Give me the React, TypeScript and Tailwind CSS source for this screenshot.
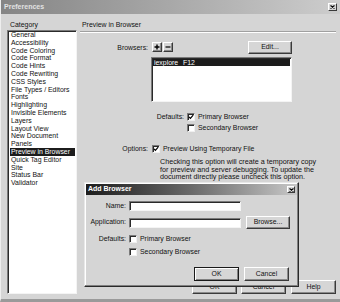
import React from "react";

const cats = [
  "General",
  "Accessibility",
  "Code Coloring",
  "Code Format",
  "Code Hints",
  "Code Rewriting",
  "CSS Styles",
  "File Types / Editors",
  "Fonts",
  "Highlighting",
  "Invisible Elements",
  "Layers",
  "Layout View",
  "New Document",
  "Panels",
  "Preview in Browser",
  "Quick Tag Editor",
  "Site",
  "Status Bar",
  "Validator",
];

function Btn({
  children,
  className = "",
  def = false,
}: {
  children: React.ReactNode;
  className?: string;
  def?: boolean;
}) {
  return (
    <div
      className={`flex items-center justify-center bg-[#d6d6d6] ${
        def
          ? "border border-[#1a1a1a] shadow-[inset_1px_1px_0_#ffffff,inset_-1px_-1px_0_#808080]"
          : "border border-t-white border-l-white border-r-[#3a3a3a] border-b-[#3a3a3a] shadow-[inset_-1px_-1px_0_#8a8a8a]"
      } ${className}`}
    >
      {children}
    </div>
  );
}

function Check({ checked = false }: { checked?: boolean }) {
  return (
    <div className="relative w-[8px] h-[8px] shrink-0 bg-white border border-t-[#7a7a7a] border-l-[#7a7a7a] border-r-[#f0f0f0] border-b-[#f0f0f0] shadow-[inset_1px_1px_0_#2a2a2a]">
      {checked && (
        <svg
          className="absolute left-0 top-0"
          width="6"
          height="6"
          viewBox="0 0 6 6"
        >
          <path d="M1 2.8 L2.4 4.3 L5.2 1.2" stroke="#000" strokeWidth="1.2" fill="none" />
        </svg>
      )}
    </div>
  );
}

function CloseBox({ className = "" }: { className?: string }) {
  return (
    <div
      className={`relative bg-[#d6d6d6] border border-t-white border-l-white border-r-[#3a3a3a] border-b-[#3a3a3a] ${className}`}
    >
      <svg className="absolute left-[1px] top-[1px]" width="5" height="4" viewBox="0 0 5 4">
        <path d="M0.5 0.5 L4.5 3.5 M4.5 0.5 L0.5 3.5" stroke="#000" strokeWidth="1.1" />
      </svg>
    </div>
  );
}

export default function App() {
  return (
    <div className="relative w-[340px] h-[302px] overflow-hidden bg-[#d5d5d5] text-[6.9px] text-[#111] font-['Liberation_Sans',Arial,sans-serif] border-b-[3px] border-b-[#9a9a9a] border-l border-l-[#eeeeee]">
      {/* title bar */}
      <div className="h-[14px] flex items-center justify-between bg-gradient-to-r from-[#858585] to-[#cdcdcd] pl-[3px] pr-[3px]">
        <span className="font-bold text-[7px] text-[#e2e2e2]">Preferences</span>
        <CloseBox className="w-[9px] h-[8px]" />
      </div>

      <div className="flex h-[285px]">
        {/* left column */}
        <div className="w-[79px] pl-[6px] pt-[6px] shrink-0">
          <div className="h-[10px] leading-[10px] pl-[3px]">Category</div>
          <div className="w-[70px] h-[264px] bg-white border border-t-[#7a7a7a] border-l-[#7a7a7a] border-r-[#f4f4f4] border-b-[#f4f4f4] shadow-[inset_1px_1px_0_#2a2a2a] pt-[0px]">
            {cats.map((c) => (
              <div
                key={c}
                className={`h-[7.8px] leading-[7.8px] ml-[2px] mr-[1px] pl-[1px] whitespace-nowrap ${
                  c === "Preview in Browser" ? "bg-[#1c1c1c] text-white" : ""
                }`}
              >
                {c}
              </div>
            ))}
          </div>
        </div>

        {/* right column */}
        <div className="flex-1 flex flex-col pt-[6px]">
          <div className="h-[10px] leading-[10px] pl-[2px]">Preview in Browser</div>
          <div className="h-[2px] mt-[1px] border-t border-t-[#a0a0a0] border-b border-b-white mr-[4px]" />

          {/* Browsers row */}
          <div className="flex items-start mt-[8px] h-[13px]">
            <div className="w-[68px] text-right leading-[13px]">Browsers:</div>
            <div className="ml-[4px] w-[140px] flex justify-between">
              <div className="flex gap-[1px] mt-[1px]">
                <Btn className="w-[10px] h-[10px]">
                  <svg width="6" height="6" viewBox="0 0 6 6">
                    <path d="M3 0.5 V5.5 M0.5 3 H5.5" stroke="#000" strokeWidth="1.4" />
                  </svg>
                </Btn>
                <Btn className="w-[10px] h-[10px]">
                  <svg width="6" height="6" viewBox="0 0 6 6">
                    <path d="M0.5 3 H5.5" stroke="#000" strokeWidth="1.2" />
                  </svg>
                </Btn>
              </div>
              <Btn className="w-[44px] h-[13px]">Edit...</Btn>
            </div>
          </div>

          {/* browser listbox */}
          <div className="ml-[71px] mt-[3px] w-[141px] h-[45px] bg-white border border-t-[#7a7a7a] border-l-[#7a7a7a] border-r-[#f4f4f4] border-b-[#f4f4f4] shadow-[inset_1px_1px_0_#2a2a2a] pt-[1px]">
            <div className="h-[7px] leading-[7px] mx-[1px] bg-[#1c1c1c] text-white flex">
              <span className="w-[30px] pl-[1px]">iexplore</span>
              <span>F12</span>
            </div>
          </div>

          {/* Defaults */}
          <div className="flex items-center mt-[11px] h-[8px]">
            <div className="w-[104px] text-right">Defaults:</div>
            <div className="ml-[3px]">
              <Check checked />
            </div>
            <div className="ml-[3px]">Primary Browser</div>
          </div>
          <div className="flex items-center mt-[3px] h-[8px]">
            <div className="ml-[107px]">
              <Check />
            </div>
            <div className="ml-[3px]">Secondary Browser</div>
          </div>

          {/* Options */}
          <div className="flex items-center mt-[13px] h-[8px]">
            <div className="w-[68px] text-right">Options:</div>
            <div className="ml-[4px]">
              <Check checked />
            </div>
            <div className="ml-[3px]">Preview Using Temporary File</div>
          </div>
          <div className="ml-[80px] mt-[5px] leading-[7.5px] w-[180px] text-[7.2px] whitespace-nowrap">
            Checking this option will create a temporary copy
            <br />
            for preview and server debugging. To update the
            <br />
            document directly please uncheck this option.
          </div>

          <div className="flex-1" />
          <div className="flex h-[14px] mb-[5px] ml-[112px]">
            <Btn className="w-[45px] h-[14px]">OK</Btn>
            <Btn className="w-[45px] h-[14px] ml-[4px]">Cancel</Btn>
            <Btn className="w-[45px] h-[14px] ml-[5px]">Help</Btn>
          </div>
        </div>
      </div>

      {/* Add Browser dialog */}
      <div className="absolute left-[83px] top-[182px] w-[215px] h-[105px] bg-[#d5d5d5] border border-t-[#e8e8e8] border-l-[#e8e8e8] border-r-[#2a2a2a] border-b-[#2a2a2a] shadow-[inset_-1px_-1px_0_#808080,inset_1px_1px_0_#ffffff] flex flex-col">
        <div className="mx-[1px] mt-[1px] h-[11px] flex items-center justify-between bg-gradient-to-r from-[#1e1e1e] via-[#6a6a6a] to-[#c8c8c8] pl-[2px] pr-[2px]">
          <span className="font-bold text-[7px] text-white">Add Browser</span>
          <CloseBox className="w-[8px] h-[7px]" />
        </div>

        <div className="flex items-center mt-[6px] h-[10px]">
          <div className="w-[41px] text-right">Name:</div>
          <div className="ml-[3px] w-[112px] h-[10px] bg-white border border-t-[#7a7a7a] border-l-[#7a7a7a] border-r-[#f4f4f4] border-b-[#f4f4f4] shadow-[inset_1px_1px_0_#2a2a2a]" />
        </div>
        <div className="flex items-center mt-[5px] h-[13px]">
          <div className="w-[41px] text-right whitespace-nowrap">Application:</div>
          <div className="ml-[3px] w-[112px] h-[10px] bg-white border border-t-[#7a7a7a] border-l-[#7a7a7a] border-r-[#f4f4f4] border-b-[#f4f4f4] shadow-[inset_1px_1px_0_#2a2a2a]" />
          <Btn className="ml-[5px] w-[44px] h-[13px]">Browse...</Btn>
        </div>
        <div className="flex items-center mt-[6px] h-[8px]">
          <div className="w-[41px] text-right">Defaults:</div>
          <div className="ml-[3px]">
            <Check />
          </div>
          <div className="ml-[3px]">Primary Browser</div>
        </div>
        <div className="flex items-center mt-[5px] h-[8px]">
          <div className="ml-[44px]">
            <Check />
          </div>
          <div className="ml-[3px]">Secondary Browser</div>
        </div>
        <div className="flex mt-[11px] h-[14px] ml-[109px]">
          <Btn def className="w-[45px] h-[14px]">OK</Btn>
          <Btn className="w-[45px] h-[14px] ml-[5px]">Cancel</Btn>
        </div>
      </div>
    </div>
  );
}
